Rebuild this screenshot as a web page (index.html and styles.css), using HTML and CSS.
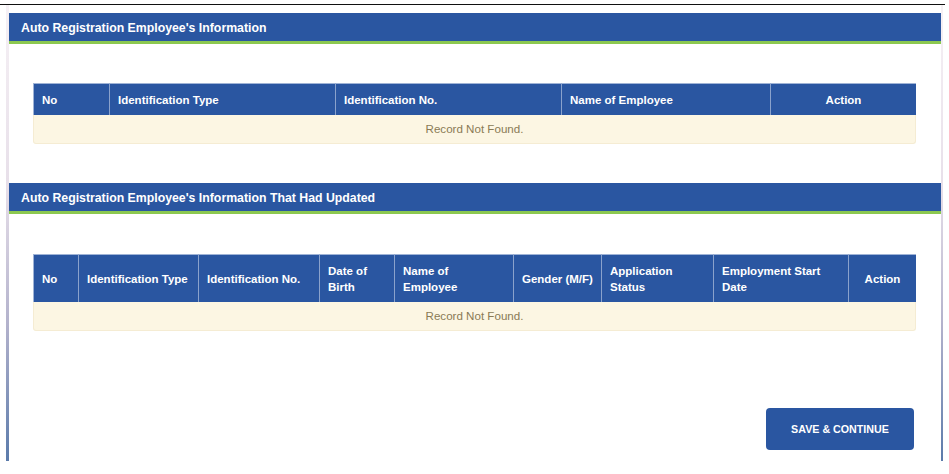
FILE: index.html
```html
<!DOCTYPE html>
<html>
<head>
<meta charset="utf-8">
<link rel="stylesheet" href="styles.css">
</head>
<body>
<div class="topline"></div>
<div class="page">
  <section class="panel">
    <h2 class="panel-title">Auto Registration Employee's Information</h2>
    <div class="panel-body">
      <table class="grid grid-1">
        <thead>
          <tr>
            <th class="c1">No</th>
            <th class="c2">Identification Type</th>
            <th class="c3">Identification No.</th>
            <th class="c4">Name of Employee</th>
            <th class="c5 center">Action</th>
          </tr>
        </thead>
        <tbody>
          <tr><td colspan="5" class="empty">Record Not Found.</td></tr>
        </tbody>
      </table>
    </div>
  </section>
  <section class="panel">
    <h2 class="panel-title">Auto Registration Employee's Information That Had Updated</h2>
    <div class="panel-body">
      <table class="grid grid-2">
        <thead>
          <tr>
            <th class="d1">No</th>
            <th class="d2">Identification Type</th>
            <th class="d3">Identification No.</th>
            <th class="d4">Date of<br>Birth</th>
            <th class="d5">Name of<br>Employee</th>
            <th class="d6">Gender (M/F)</th>
            <th class="d7">Application<br>Status</th>
            <th class="d8">Employment Start<br>Date</th>
            <th class="d9 center">Action</th>
          </tr>
        </thead>
        <tbody>
          <tr><td colspan="9" class="empty">Record Not Found.</td></tr>
        </tbody>
      </table>
    </div>
  </section>
  <div class="actions">
    <button class="btn">SAVE &amp; CONTINUE</button>
  </div>
</div>
</body>
</html>
```

FILE: styles.css
```css
html, body {
  margin: 0;
  padding: 0;
  background: #ffffff;
  font-family: "Liberation Sans", Arial, sans-serif;
}
.topline {
  margin-top: 4px;
  width: 945px;
  height: 1px;
  background: #111;
}
.page {
  margin-left: 6px;
  width: 937px;
  height: 456px;
  box-sizing: border-box;
  padding-top: 8px;
  border-left: 3px solid #c9c4d8;
  border-right: 2px solid #c9c4d8;
  border-image: linear-gradient(to bottom, #f6f1f5 0%, #e7dfe9 40%, #b3b2cc 70%, #5a7aaa 100%) 1;
  border-top: 0;
  border-bottom: 0;
}
.panel-title {
  margin: 0;
  height: 28px;
  line-height: 30px;
  padding-left: 12px;
  background: #2a56a1;
  color: #fff;
  font-size: 12.3px;
  font-weight: bold;
  border-bottom: 3px solid #8cc850;
}
.panel-body {
  padding: 39px 25px 39px 24px;
}
.panel + .panel .panel-body {
  padding-top: 40px;
}
.grid {
  width: 100%;
  border-collapse: separate;
  border-spacing: 0;
  table-layout: fixed;
}
.grid th {
  box-sizing: border-box;
  background: #2a56a1;
  color: #fff;
  font-size: 11.5px;
  font-weight: bold;
  text-align: left;
  padding: 0 8px;
  border-right: 1px solid #8aa2cc;
  border-top: 1px solid #9fb3d6;
  line-height: 16px;
  vertical-align: middle;
}
.grid th:first-child { border-left: 1px solid #9fb3d6; }
.grid th:last-child { border-right: 0; }
.grid th.center { text-align: center; }
.grid-1 th { height: 32px; }
.grid-2 th { height: 48px; }
.grid-1 .c1 { width: 77px; }
.grid-1 .c2 { width: 226px; }
.grid-1 .c3 { width: 226px; }
.grid-1 .c4 { width: 209px; }
.grid-2 .d1 { width: 46px; }
.grid-2 .d2 { width: 120px; }
.grid-2 .d3 { width: 121px; }
.grid-2 .d4 { width: 75px; }
.grid-2 .d5 { width: 119px; }
.grid-2 .d6 { width: 88px; }
.grid-2 .d7 { width: 112px; }
.grid-2 .d8 { width: 135px; }
.empty {
  height: 28px;
  background: #fcf6e3;
  border: 1px solid #f5ecd3;
  border-top: 0;
  border-radius: 0 0 3px 3px;
  text-align: center;
  color: #8a7a55;
  font-size: 11.6px;
  padding: 0;
  line-height: 28px;
}
.actions {
  display: flex;
  justify-content: flex-end;
  padding-right: 27px;
  margin-top: 38px;
}
.btn {
  width: 148px;
  height: 42px;
  background: #2a56a1;
  color: #fff;
  border: 0;
  border-radius: 4px;
  font-family: "Liberation Sans", Arial, sans-serif;
  font-size: 10.7px;
  font-weight: bold;
  cursor: pointer;
  padding: 0;
}
```
